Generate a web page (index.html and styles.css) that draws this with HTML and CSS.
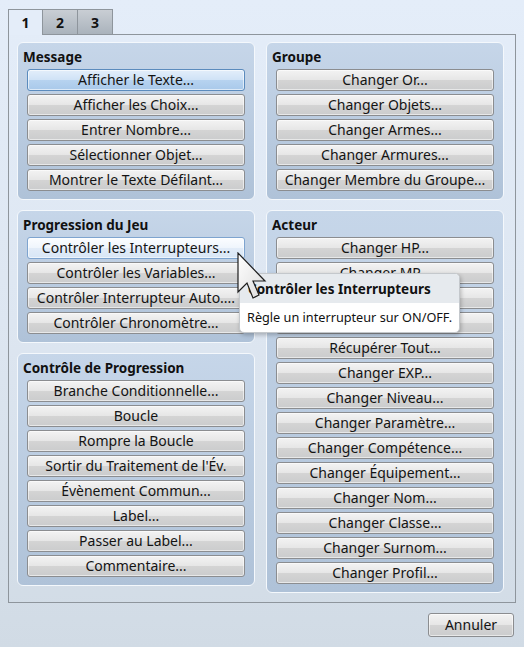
FILE: index.html
```html
<!DOCTYPE html>
<html lang="fr">
<head>
<meta charset="utf-8">
<title>Commandes</title>
<link rel="stylesheet" href="styles.css">
</head>
<body>
<div class="window">
  <div class="tabs">
    <div class="tab active">1</div>
    <div class="tab">2</div>
    <div class="tab">3</div>
  </div>
  <div class="pane">
    <div class="column">
      <section class="group">
        <h2 class="group-title">Message</h2>
        <div class="buttons">
          <button class="btn selected">Afficher le Texte...</button>
          <button class="btn">Afficher les Choix...</button>
          <button class="btn">Entrer Nombre...</button>
          <button class="btn">Sélectionner Objet...</button>
          <button class="btn">Montrer le Texte Défilant...</button>
        </div>
      </section>
      <section class="group">
        <h2 class="group-title">Progression du Jeu</h2>
        <div class="buttons">
          <button class="btn hover">Contrôler les Interrupteurs...</button>
          <button class="btn">Contrôler les Variables...</button>
          <button class="btn">Contrôler Interrupteur Auto....</button>
          <button class="btn">Contrôler Chronomètre...</button>
        </div>
      </section>
      <section class="group">
        <h2 class="group-title">Contrôle de Progression</h2>
        <div class="buttons">
          <button class="btn">Branche Conditionnelle...</button>
          <button class="btn">Boucle</button>
          <button class="btn">Rompre la Boucle</button>
          <button class="btn">Sortir du Traitement de l'Év.</button>
          <button class="btn">Évènement Commun...</button>
          <button class="btn">Label...</button>
          <button class="btn">Passer au Label...</button>
          <button class="btn">Commentaire...</button>
        </div>
      </section>
    </div>
    <div class="column">
      <section class="group">
        <h2 class="group-title">Groupe</h2>
        <div class="buttons">
          <button class="btn">Changer Or...</button>
          <button class="btn">Changer Objets...</button>
          <button class="btn">Changer Armes...</button>
          <button class="btn">Changer Armures...</button>
          <button class="btn">Changer Membre du Groupe...</button>
        </div>
      </section>
      <section class="group">
        <h2 class="group-title">Acteur</h2>
        <div class="buttons">
          <button class="btn">Changer HP...</button>
          <button class="btn">Changer MP...</button>
          <button class="btn">Changer TP...</button>
          <button class="btn">Changer État...</button>
          <button class="btn">Récupérer Tout...</button>
          <button class="btn">Changer EXP...</button>
          <button class="btn">Changer Niveau...</button>
          <button class="btn">Changer Paramètre...</button>
          <button class="btn">Changer Compétence...</button>
          <button class="btn">Changer Équipement...</button>
          <button class="btn">Changer Nom...</button>
          <button class="btn">Changer Classe...</button>
          <button class="btn">Changer Surnom...</button>
          <button class="btn">Changer Profil...</button>
        </div>
      </section>
    </div>
  </div>
  <div class="footer">
    <button class="btn cancel">Annuler</button>
  </div>

  <div class="tooltip">
    <div class="tooltip-head">Contrôler les Interrupteurs</div>
    <div class="tooltip-body">Règle un interrupteur sur ON/OFF.</div>
  </div>
  <svg class="cursor" width="30" height="48" viewBox="0 0 30 48">
    <defs>
      <linearGradient id="cg" x1="0" y1="0" x2="1" y2="1">
        <stop offset="0" stop-color="#ffffff"/>
        <stop offset="1" stop-color="#dcdcdc"/>
      </linearGradient>
    </defs>
    <polygon points="1,1 1,40 10,31 16,46 22,43 16,29 28,29" fill="url(#cg)" stroke="#1e1e1e" stroke-width="1.2" stroke-linejoin="miter"/>
  </svg>
</div>
</body>
</html>
```

FILE: styles.css
```css
* { box-sizing: border-box; }
html, body { margin: 0; padding: 0; }
body {
  width: 524px;
  height: 647px;
  overflow: hidden;
  font-family: "Noto Sans", "DejaVu Sans", sans-serif;
  font-size: 14px;
  color: #141414;
}
.window {
  position: relative;
  width: 524px;
  height: 647px;
  background: linear-gradient(to bottom, #e4edf9 0%, #dde6f1 50%, #d1dbe5 100%);
  padding: 9px 8px 0 8px;
}
.tabs {
  display: flex;
  height: 25px;
  position: relative;
  z-index: 1;
}
.tab {
  width: 35px;
  height: 25px;
  border: 1px solid #8e959c;
  border-bottom: none;
  border-left: none;
  display: flex;
  align-items: center;
  justify-content: center;
  font-size: 14px;
  font-weight: bold;
  color: #111;
  background: linear-gradient(to bottom, #c9ced4, #aab3bc);
}
.tab.active {
  border-left: 1px solid #8e959c;
  background: #e4edf9;
  height: 26px;
  margin-bottom: -1px;
}
.pane {
  width: 508px;
  height: 569px;
  border: 1px solid #8e959c;
  padding: 7px 10px 0 8px;
  display: flex;
  gap: 11px;
  align-items: flex-start;
}
.column {
  width: 238px;
  display: flex;
  flex-direction: column;
  gap: 10px;
}
.group {
  border: 1px solid #f4f8fc;
  border-radius: 6px;
  background: linear-gradient(to bottom, #c6d6e9, #afc2d8);
  padding: 4px 9px 8px 9px;
}
.group-title {
  margin: 0 0 2px -4px;
  font-size: 13.5px;
  font-weight: bold;
  line-height: 20px;
  height: 20px;
  color: #111;
}
.buttons {
  display: flex;
  flex-direction: column;
  gap: 3px;
}
.btn {
  display: block;
  width: 218px;
  height: 22px;
  padding: 0;
  margin: 0;
  font-family: inherit;
  font-size: 14px;
  color: #141414;
  text-align: center;
  line-height: 20px;
  border: 1px solid #8b8d90;
  border-radius: 3px;
  background: linear-gradient(to bottom, #f3f3f3 0%, #e6e6e6 50%, #d4d4d4 51%, #cbcccd 100%);
  box-shadow: inset 0 0 0 1px rgba(255,255,255,0.55);
  white-space: nowrap;
}
.btn.selected {
  border-color: #5b8bbd;
  background: linear-gradient(to bottom, #e3eefa 0%, #cfe2f6 50%, #b7d3f0 51%, #a9c9ea 100%);
  box-shadow: inset 0 0 0 1px rgba(255,255,255,0.6);
}
.btn.hover {
  border-color: #7ea4cf;
  background: linear-gradient(to bottom, #fbfdff 0%, #eff5fc 50%, #e2ecf8 51%, #d7e6f6 100%);
}
.footer {
  display: flex;
  justify-content: flex-end;
  padding: 10px 2px 0 0;
}
.btn.cancel {
  width: 86px;
  height: 24px;
  line-height: 22px;
}
.tooltip {
  position: absolute;
  left: 239px;
  top: 273px;
  width: 221px;
  border: 1px solid #c4c8cc;
  border-radius: 5px;
  background: #ffffff;
  box-shadow: 1px 2px 4px rgba(0,0,0,0.25);
  overflow: hidden;
  z-index: 5;
  white-space: nowrap;
}
.tooltip-head {
  background: #e6eaee;
  font-weight: bold;
  font-size: 13.5px;
  padding: 0 8px;
  height: 29px;
  line-height: 30px;
  color: #111;
}
.tooltip-body {
  padding: 0 7px;
  height: 29px;
  line-height: 28px;
  font-size: 12.7px;
  color: #111;
}
.cursor {
  position: absolute;
  left: 237px;
  top: 252px;
  z-index: 10;
}
```
